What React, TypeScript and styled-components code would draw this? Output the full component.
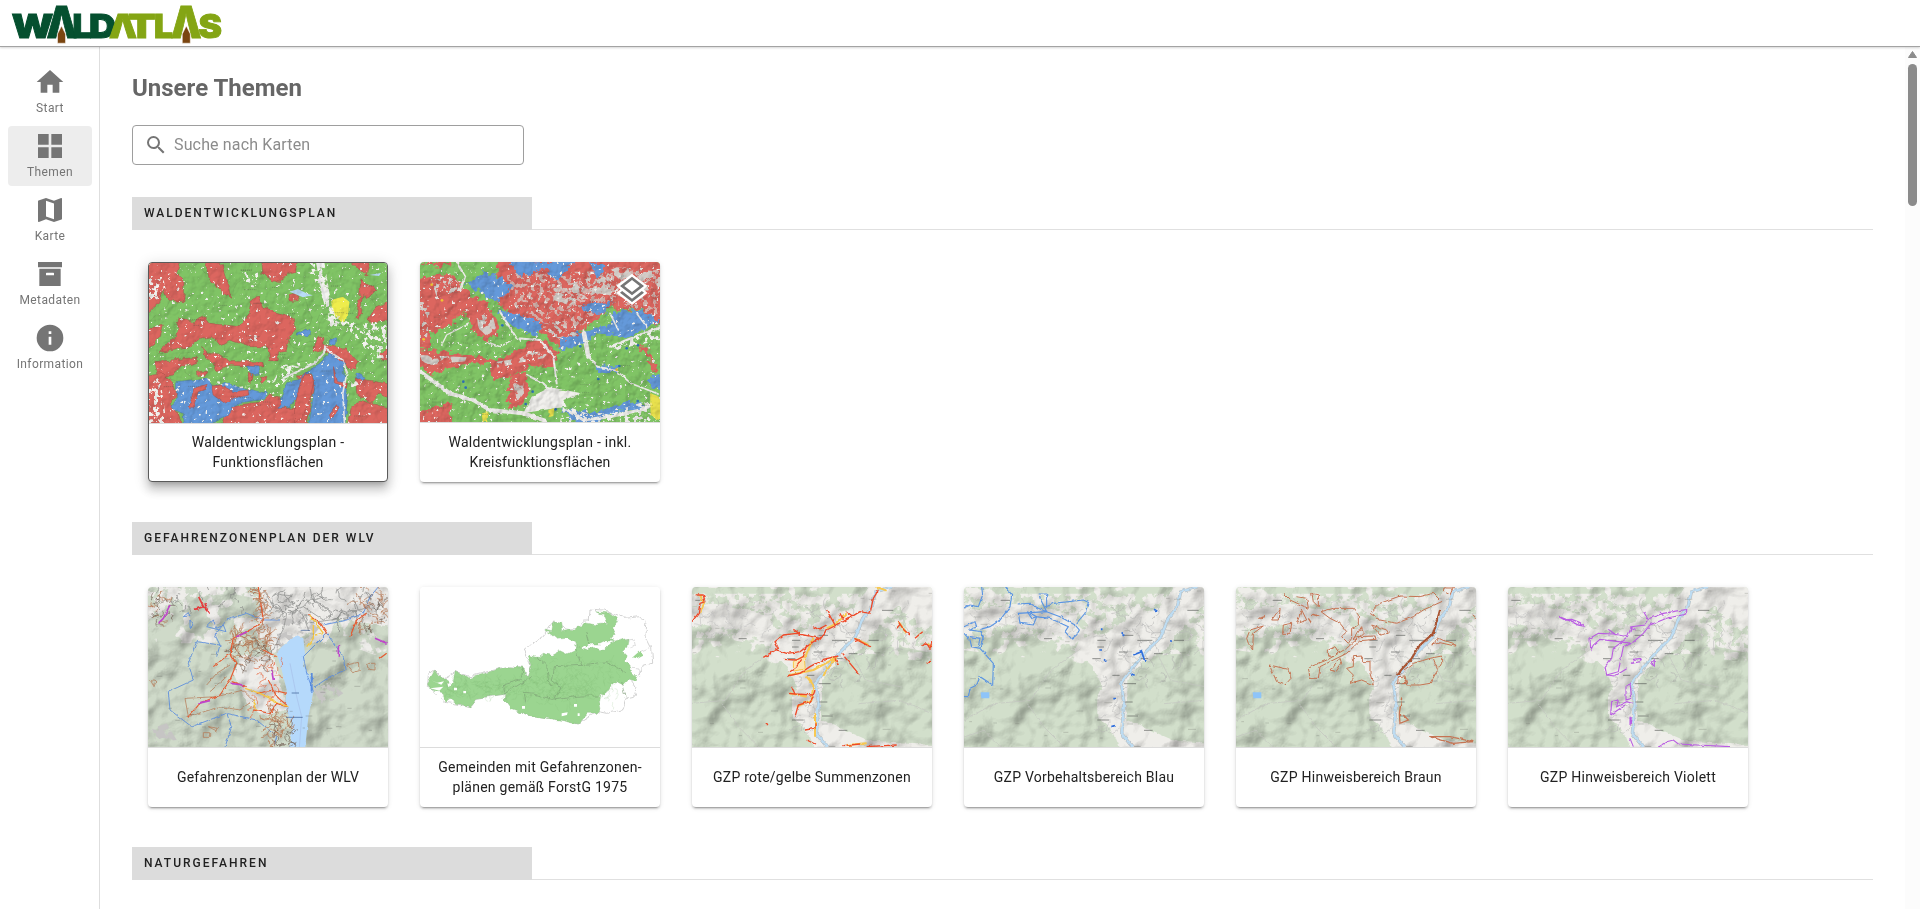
import React from "react";
import styled, { createGlobalStyle } from "styled-components";

const GlobalStyle = createGlobalStyle`
  *, *::before, *::after { box-sizing: border-box; }
  html, body { margin: 0; padding: 0; height: 100%; overflow: hidden; background: #fff; }
  body { font-family: Roboto, "Liberation Sans", sans-serif; color: #212121; }
`;

/* ---------- page frame ---------- */

const Page = styled.div`
  height: 100vh;
  display: flex;
  flex-direction: column;
  overflow: hidden;
`;

const Header = styled.header`
  flex: none;
  height: 47px;
  border-bottom: 1px solid #a3a3a3;
  box-shadow: 0 1px 2px rgba(0, 0, 0, 0.16);
  background: #fff;
  z-index: 1;
`;

const Logo = styled.svg`
  display: block;
  width: 240px;
  height: 46px;
  overflow: visible;
  font-family: Inter, sans-serif;
  font-weight: 900;
`;

const Body = styled.div`
  flex: 1;
  min-height: 0;
  display: flex;
`;

const Sidebar = styled.nav`
  flex: none;
  width: 100px;
  padding: 15px 8px 0;
  border-right: 1px solid #dedede;
  display: flex;
  flex-direction: column;
  gap: 4px;
`;

const NavItem = styled.a<{ $active?: boolean }>`
  width: 84px;
  height: 60px;
  padding-top: 4px;
  border-radius: 4px;
  display: flex;
  flex-direction: column;
  align-items: center;
  color: #757575;
  background: ${(p) => (p.$active ? "#ededed" : "transparent")};
  font-size: 12px;
  line-height: 20px;
  letter-spacing: 0.4px;
`;

const Icon = styled.svg<{ $size: number }>`
  display: block;
  flex: none;
  width: ${(p) => p.$size}px;
  height: ${(p) => p.$size}px;
  fill: currentColor;
`;

const Main = styled.main`
  flex: 1;
  min-width: 0;
  padding: 25px 32px 0;
  overflow: hidden;
`;

const Title = styled.h1`
  margin: 0 0 21px;
  height: 32px;
  font-size: 24px;
  line-height: 32px;
  font-weight: 700;
  color: #666;
`;

const SearchBox = styled.div`
  width: 392px;
  height: 40px;
  margin-bottom: 32px;
  padding-left: 11px;
  border: 1px solid #9e9e9e;
  border-radius: 4px;
  display: flex;
  align-items: center;
  gap: 6px;
  color: #757575;
`;

const Placeholder = styled.span`
  padding-bottom: 2px;
  font-size: 16px;
  letter-spacing: 0.15px;
  color: #8c8c8c;
`;

const Section = styled.section`
  margin-bottom: 40px;
`;

const SectionHead = styled.div`
  height: 33px;
  border-bottom: 1px solid #e0e0e0;
  margin-bottom: 32px;
`;

const SectionTitle = styled.h2`
  margin: 0;
  width: 400px;
  height: 33px;
  padding-left: 12px;
  background: #dcdcdc;
  font-size: 12px;
  line-height: 32px;
  font-weight: 500;
  letter-spacing: 2px;
  text-transform: uppercase;
  color: #212121;
`;

const CardRow = styled.div`
  display: flex;
  gap: 32px;
  padding-left: 16px;
`;

const Card = styled.article<{ $selected?: boolean }>`
  position: relative;
  flex: none;
  width: 240px;
  height: 220px;
  border-radius: 4px;
  overflow: hidden;
  background: #fff;
  display: flex;
  flex-direction: column;
  border: ${(p) => (p.$selected ? "1px solid #5a5a5a" : "none")};
  box-shadow: ${(p) =>
    p.$selected
      ? "0 5px 5px -3px rgba(0,0,0,.2), 0 8px 10px 1px rgba(0,0,0,.14), 0 3px 14px 2px rgba(0,0,0,.12)"
      : "0 3px 1px -2px rgba(0,0,0,.2), 0 2px 2px 0 rgba(0,0,0,.14), 0 1px 5px 0 rgba(0,0,0,.12)"};
`;

const MapPicture = styled.svg`
  display: block;
  flex: none;
  width: 100%;
  height: 160px;
`;

const CardLabel = styled.div`
  flex: 1;
  padding-bottom: 2px;
  border-top: 1px solid #dcdcdc;
  display: flex;
  align-items: center;
  justify-content: center;
  text-align: center;
  white-space: pre-line;
  font-size: 14px;
  line-height: 20px;
  letter-spacing: 0.25px;
  color: #212121;
`;

const LayerBadge = styled.svg`
  position: absolute;
  top: 12px;
  right: 12px;
  width: 32px;
  height: 32px;
  overflow: visible;
`;

const Scrollbar = styled.div`
  flex: none;
  width: 15px;
  padding-top: 4px;
  background: #fcfcfc;
  display: flex;
  flex-direction: column;
  align-items: center;
  gap: 6px;
`;

const Thumb = styled.div`
  width: 9px;
  height: 142px;
  border-radius: 5px;
  background: #8b8b8b;
`;

const SharedDefs = styled.svg`
  position: absolute;
  width: 0;
  height: 0;
`;

const Multiply = styled.rect`
  mix-blend-mode: multiply;
`;

/* ---------- map drawing helpers ---------- */

function random(seed: number) {
  let s = seed;
  return () => {
    s = (s * 1664525 + 1013904223) % 4294967296;
    return s / 4294967296;
  };
}

type Area = [number, number, number, number];

/* Short strokes standing for place names and paths */
function dashes(seed: number, n: number, [x, y, w, h]: Area, len = 12) {
  const r = random(seed);
  let d = "";
  for (let i = 0; i < n; i++) {
    const l = len * (0.5 + r());
    d += `M${(x + r() * w).toFixed(0)} ${(y + r() * h).toFixed(0)}h${l.toFixed(0)}`;
  }
  return d;
}

/* Crooked little lines such as streams, roads and zone borders */
function squiggles(seed: number, n: number, [x, y, w, h]: Area, step = 8, parts = 5) {
  const r = random(seed);
  let d = "";
  for (let i = 0; i < n; i++) {
    d += `M${(x + r() * w).toFixed(0)} ${(y + r() * h).toFixed(0)}`;
    let a = r() * 6.28;
    for (let k = 0; k < parts; k++) {
      a += (r() - 0.5) * 2.2;
      d += `l${(Math.cos(a) * step).toFixed(1)} ${(Math.sin(a) * step).toFixed(1)}`;
    }
  }
  return d;
}

function MapFilters() {
  const rough = (id: string, f: number, scale: number) => (
    <filter id={id} x="-5%" y="-5%" width="110%" height="110%" colorInterpolationFilters="sRGB">
      <feTurbulence type="fractalNoise" baseFrequency={f} numOctaves="3" seed="4" />
      <feDisplacementMap in="SourceGraphic" scale={scale} xChannelSelector="R" yChannelSelector="G" />
    </filter>
  );
  const speckle = (id: string, f: number, cut: number, seed: number) => (
    <filter id={id} x="0" y="0" width="100%" height="100%" colorInterpolationFilters="sRGB">
      <feTurbulence type="fractalNoise" baseFrequency={f} numOctaves="4" seed={seed} />
      <feColorMatrix values={`0 0 0 0 0  0 0 0 0 0  0 0 0 0 0  14 0 0 0 ${-14 * cut}`} result="n" />
      <feComposite in="SourceGraphic" in2="n" operator="in" />
    </filter>
  );
  const relief = (id: string, f: number, height: number, seed: number) => (
    <filter id={id} x="0" y="0" width="100%" height="100%" colorInterpolationFilters="sRGB">
      <feTurbulence type="fractalNoise" baseFrequency={f} numOctaves="3" seed={seed} />
      <feColorMatrix values="0 0 0 0 0  0 0 0 0 0  0 0 0 0 0  1 0 0 0 0" />
      <feDiffuseLighting surfaceScale={height} lightingColor="#fff">
        <feDistantLight azimuth="225" elevation="55" />
      </feDiffuseLighting>
      <feComponentTransfer>
        <feFuncR type="linear" slope="0.6" intercept="0.48" />
        <feFuncG type="linear" slope="0.6" intercept="0.48" />
        <feFuncB type="linear" slope="0.6" intercept="0.48" />
      </feComponentTransfer>
    </filter>
  );
  return (
    <SharedDefs aria-hidden>
      <defs>
        {rough("rough", 0.04, 18)}
        {rough("jagged", 0.06, 32)}
        {rough("wiggle", 0.06, 9)}
        {speckle("patch", 0.022, 0.56, 8)}
        {speckle("patchFine", 0.07, 0.53, 3)}
        {speckle("dust", 0.08, 0.7, 12)}
        {speckle("half", 0.035, 0.47, 21)}
        {relief("reliefSoft", 0.009, 22, 5)}
        {relief("reliefFine", 0.03, 6, 9)}
      </defs>
    </SharedDefs>
  );
}

const GREEN = "#80c465";
const RED = "#dc665f";
const BLUE = "#6499da";

function FunctionAreasMap() {
  return (
    <MapPicture viewBox="57 39 716 480" preserveAspectRatio="none">
      <rect x="57" y="39" width="716" height="480" fill={GREEN} />
      <g stroke="#5d7f4c" strokeWidth="1" fill="none" opacity="0.6">
        <path d={squiggles(7, 32, [57, 39, 716, 480], 20, 6)} />
      </g>
      <g filter="url(#rough)" stroke="#a34e48" strokeWidth="1.5" fill={RED}>
        <path d="M40 20H155L140 70 165 100 162 155 120 150 100 120 85 160 50 195Z" />
        <path d="M222 20L280 45 290 80 300 130 310 145 270 120 240 90Z" />
        <path d="M395 20H505L498 65 470 72 455 98 430 92 400 72Z" />
        <path d="M650 20L722 25 712 78 690 60Z" />
        <path d="M695 85L740 120 715 145 700 130 690 212 680 205 690 140Z" />
        <path d="M790 150L740 170 718 205 730 222 790 210Z" />
        <path d="M85 305L135 260 150 205 190 215 225 200 240 220 330 230 358 190 365 145 385 142 400 175 450 190 490 200 495 235 480 260 470 300 450 305 445 332 420 332 415 290 360 290 300 270 270 285 250 260 210 265 180 290Z" />
        <path d="M40 240L100 225 90 265 40 305Z" />
        <path d="M215 290L240 310 290 320 300 335 400 335 402 352 300 345 260 362 250 340 228 325Z" />
        <path d="M75 335L200 322 200 338 150 352 130 375 100 380 82 370Z" />
        <path d="M40 380L100 370 130 400 140 430 120 460 140 480 165 540H40Z" />
        <path d="M270 540L290 485 320 465 400 455 420 435 450 440 455 475 500 475 505 375 525 370 550 378 555 420 545 450 530 540Z" />
        <path d="M565 262H580V285L650 295 685 335 680 358 655 350 600 315 580 300 550 305Z" />
        <path d="M790 280L745 320 790 338Z" />
        <path d="M680 385L740 395 790 405V450L750 430 725 460 685 430Z" />
        <path d="M650 540L665 475 690 450 790 480V540Z" />
        <ellipse cx="492" cy="141" rx="16" ry="10" />
        <ellipse cx="217" cy="370" rx="20" ry="6" />
        <path d="M358 370l12 5-3 25-8-5zM390 375l18 8-12 20-6-8z" />
      </g>
      <g filter="url(#rough)" stroke="#4b78ae" strokeWidth="1.5" fill={BLUE}>
        <path d="M140 395L230 385 250 410 300 398 320 410 370 420 410 430 405 447 320 460 290 500 255 515 235 540H165L160 490 120 470 140 450Z" />
        <path d="M445 475L460 425 475 395 510 385 570 340 600 312 645 335 645 400 655 440 645 540H535L555 420 550 375 520 370 505 440 485 472Z" />
        <path d="M500 250l25-12 18 8-12 14zM600 265l22 2-2 18-20-2zM350 348l35 3 3 20-18 4zM680 368l28 14-8 10-22-12z" />
      </g>
      <g filter="url(#wiggle)" stroke="#a34e48" strokeWidth="1.5" fill={RED}>
        <path d="M178 472L192 415 232 403 228 418 205 425 190 472Z" />
        <path d="M245 408L275 405 310 425 355 420 357 435 310 445 288 462 250 435Z" />
        <path d="M612 350L624 395 654 400 650 415 615 398Z" />
        <path d="M622 463L630 475 604 508 600 495Z" />
        <path d="M525 375Q552 370 552 400L540 450 520 500 495 519 495 470 512 400Z" />
      </g>
      <path filter="url(#wiggle)" fill="#eeed4c" d="M605 150L640 140 660 155 655 200 640 220 608 190Z" />
      <g fill="#f3f3ef">
        <path filter="url(#patchFine)" d="M540 39H585L600 130 610 190 655 215 773 225V325H725L690 270 640 240 590 225 600 180 565 120Z" />
        <path filter="url(#half)" d="M560 39H585L600 130 620 210 600 215 575 130Z" />
        <path filter="url(#patchFine)" d="M57 85H100L110 130 57 150Z" />
        <path filter="url(#patchFine)" d="M57 400L90 380 110 519H57Z" />
        <path filter="url(#patchFine)" d="M460 340L510 350 450 410 330 415 240 395 230 385 330 410 430 395Z" />
        <path filter="url(#patchFine)" d="M645 340L665 390 700 400 660 415Z" />
        <path filter="url(#patchFine)" d="M340 60H385V100H340ZM350 255H385V275H350Z" />
        <path filter="url(#dust)" d="M57 39H773V519H57Z" />
      </g>
      <g filter="url(#wiggle)" fill="none" stroke="#e9e8e8" strokeWidth="6">
        <path d="M588 285L583 310 555 340 460 385" />
        <path d="M585 295L640 330 652 370 640 430 645 519" strokeWidth="5" />
        <path d="M575 39L570 90 595 170" />
      </g>
      <path d="M480 125l25-8 30 15 15 4-30 6zM720 75l35-6-6 9z" fill="#b9dcf8" />
      <path d={dashes(3, 40, [65, 45, 690, 460], 26)} stroke="#454a40" strokeWidth="2" strokeDasharray="4 2" opacity="0.5" />
      <Multiply x="57" y="39" width="716" height="480" filter="url(#reliefFine)" opacity="0.6" />
    </MapPicture>
  );
}

function CircleAreasMap() {
  return (
    <MapPicture viewBox="30 36 720 480">
      <rect x="30" y="36" width="720" height="480" fill={GREEN} />
      <g filter="url(#jagged)" fill={RED}>
        <path d="M265 20H770V215L720 225 700 180 600 175 520 235 500 265 450 290 380 240 310 200 240 140 262 80Z" />
        <path d="M10 95L100 70 140 80 170 130 240 170 270 240 230 272 190 240 160 185 110 235 60 250 60 300 10 290Z" />
        <path d="M10 295L170 312 250 330 300 312 360 275 400 268 442 310 432 352 360 348 330 368 250 392 240 345 180 342 60 372 10 335Z" />
        <path d="M300 378L350 368 357 430 320 482 290 462ZM10 490L120 458 132 540H10Z" />
        <path d="M690 285l20 10 30 60-6 15-16-35zM30 36H150L90 50z" />
      </g>
      <g fill="#d3cdc8">
        <path filter="url(#half)" d="M430 115L500 95 560 78 620 52 750 65V110L640 140 560 130 480 165 430 150Z" />
        <path filter="url(#patchFine)" d="M390 230L500 225 510 262 460 275Z" />
        <path filter="url(#patchFine)" opacity="0.75" d="M290 70L750 60V200L600 160 500 240 400 220 300 160Z" />
        <path filter="url(#patchFine)" d="M60 80H130L160 120 80 140ZM30 150L60 170 50 280H30Z" />
        <path filter="url(#half)" d="M200 195L245 185 258 235 230 258 205 235Z" />
        <path filter="url(#half)" d="M30 315L170 322 165 334 60 345 30 332ZM260 335L330 325 385 290 415 310 400 325 320 340 262 355Z" />
        <path filter="url(#half)" d="M305 385L340 390 342 430 322 455Z" />
      </g>
      <g filter="url(#jagged)" fill={BLUE}>
        <path d="M165 100L225 65 290 95 305 115 262 158 210 125Z" />
        <path d="M262 180L330 197 400 218 375 262 330 238 290 215Z" />
        <path d="M450 270L520 243 600 225 610 188 650 180 700 185 745 212 650 262 560 250 530 272 500 292 452 300Z" />
        <path d="M520 165L602 155 592 188 530 188ZM300 36L500 30 470 60 440 95 410 58 330 80Z" />
        <path d="M450 475L560 490 620 465 690 455 712 475 600 492 545 530 490 512Z" />
        <path d="M560 345L630 350 625 368 562 372ZM720 380H760V430L720 410ZM540 36l20 50 30-40z" />
      </g>
      <g filter="url(#wiggle)" stroke="#ecebe8" fill="none" strokeLinecap="round">
        <path d="M520 240L532 310 562 350 620 362 662 400 745 432" strokeWidth="5" />
        <path d="M522 250L535 320" strokeWidth="14" />
        <path d="M30 365L120 430 190 450 240 480 340 490 405 512" strokeWidth="12" />
        <path d="M140 36L165 80 150 120" strokeWidth="7" />
        <path d="M270 185L320 265 390 270 430 320 440 400" strokeWidth="6" />
        <path d="M350 375L400 400 430 430" strokeWidth="6" />
        <path d="M95 285L110 255 175 222M230 275L270 290 300 275" strokeWidth="4" />
        <path d="M600 190L625 240M680 190L710 230" strokeWidth="5" />
        <path d="M600 290L650 270 750 232" strokeWidth="7" />
        <path d="M470 480L520 510 600 500 690 480 750 455" strokeWidth="9" />
      </g>
      <g fill="#f1f0ed">
        <path filter="url(#wiggle)" d="M365 440L420 412 515 430 460 450 470 470 400 480 340 490Z" />
        <path filter="url(#patchFine)" d="M600 290L750 235V270L620 300ZM460 465L560 500 750 440V516H450Z" />
        <path filter="url(#dust)" d="M30 36H750V516H30Z" />
      </g>
      <path filter="url(#wiggle)" fill="#e8e04d" d="M415 480l18-6-3 24-14 4zM215 490l20-4-3 30h-14zM720 430l30 10v70l-28-12z" />
      <g fill="#2f72b8">
        <circle cx="277" cy="226" r="4" /><circle cx="160" cy="395" r="4" /><circle cx="167" cy="413" r="4" />
        <circle cx="368" cy="425" r="4" /><circle cx="650" cy="295" r="4" /><circle cx="684" cy="286" r="4" />
        <circle cx="565" cy="387" r="4" /><circle cx="347" cy="462" r="4" /><circle cx="437" cy="478" r="4" />
        <circle cx="628" cy="348" r="4" /><circle cx="511" cy="289" r="4" /><circle cx="683" cy="453" r="4" />
      </g>
      <g fill="#efc52f">
        <circle cx="65" cy="104" r="4" /><circle cx="96" cy="151" r="4" /><circle cx="41" cy="268" r="4" /><circle cx="620" cy="359" r="4" />
      </g>
      <path d={dashes(13, 30, [40, 45, 690, 460], 24)} stroke="#4e544a" strokeWidth="2" strokeDasharray="4 2" opacity="0.4" />
      <Multiply x="30" y="36" width="720" height="480" filter="url(#reliefFine)" opacity="0.8" />
    </MapPicture>
  );
}

function HazardPlanMap() {
  return (
    <MapPicture viewBox="54 231 720 480">
      <rect x="54" y="231" width="720" height="480" fill="#cfdac9" />
      <g fill="#eeedea">
        <path filter="url(#rough)" d="M400 210H790V350L680 340 620 320 590 400 540 370 500 380 430 430 380 330Z" />
        <path filter="url(#rough)" d="M330 440L430 430 470 600 400 615 350 580 310 490Z" />
        <path filter="url(#half)" d="M54 231H400V270L300 250 150 270 54 330Z" />
        <path filter="url(#patch)" d="M54 231H774V450L640 400H54Z" />
      </g>
      <Multiply x="54" y="231" width="720" height="480" filter="url(#reliefSoft)" />
      <path filter="url(#half)" fill="#c6c5c4" d="M440 330L500 300 580 340 530 400 440 430ZM550 540L600 515 640 550 580 590ZM54 660L110 640 140 690 54 700Z" />
      <path filter="url(#wiggle)" fill="#b5d9fb" d="M455 410L500 375 520 385 525 430 520 465 545 510 550 545 535 620 525 720H480L485 640 465 590 470 540 455 480 440 430Z" />
      <path d="M480 460L500 560 515 620 508 711" fill="none" stroke="#a3b6e2" strokeWidth="1.5" />
      <g fill="none" filter="url(#wiggle)" strokeLinejoin="round">
        <g stroke="#858685" strokeWidth="2">
          <path d="M430 420L460 360 470 310 520 290 545 260 540 231M470 310L430 290 400 240M510 300L530 340 600 330 680 320 670 260M520 290L580 330 610 310 570 280" />
          <path d={squiggles(91, 42, [400, 235, 370, 100], 9, 6)} />
          <path d={squiggles(92, 20, [54, 235, 340, 60], 6, 5)} />
        </g>
        <g stroke="#5a8cdc" strokeWidth="2.6">
          <path d="M200 395L270 405 255 375 290 330 350 310 400 330 450 330M200 395L175 460 190 510 115 545 120 600 185 650 290 610 380 630 440 680 430 711M290 610L305 650 285 711M270 405L260 440" />
          <path d="M580 345L650 330 700 310 720 260 745 231M520 440L560 400 590 370 640 440 645 480 600 500 555 530M520 440L530 490 550 545M230 350l20-20 10 25 20-10 8 20zM160 320l15-12 5 10zM180 330l10 15-10 8z" />
          <path d="M545 490V548" strokeWidth="6" />
        </g>
        <g stroke="#b3714c" strokeWidth="2">
          <path d={squiggles(31, 52, [305, 370, 120, 80], 7, 6)} />
          <path d={squiggles(32, 34, [380, 235, 25, 120], 6, 5)} />
          <path d={squiggles(33, 28, [415, 605, 60, 90], 7, 6)} />
          <path d={squiggles(34, 24, [680, 240, 92, 120], 7, 5)} />
          <path d={squiggles(37, 12, [54, 240, 80, 100], 6, 4)} />
          <path d="M165 565L260 560 340 540 370 570 330 600 270 590 175 620ZM230 525L260 490 300 465M240 545L290 500M650 465l35-8 3 25-20 6zM710 460l25 0v20l-20-2zM235 650l30 5-5 8zM220 668h22v14h-22zM62 512l16 2-6 16z" />
        </g>
        <g stroke="#6a564a" strokeWidth="1.8">
          <path d={squiggles(41, 18, [310, 380, 110, 110], 7, 5)} />
          <path d={squiggles(42, 16, [435, 640, 45, 65], 6, 5)} />
          <path d={squiggles(43, 14, [60, 250, 70, 80], 5, 5)} />
          <path d={squiggles(44, 14, [690, 260, 80, 110], 5, 5)} />
        </g>
        <g stroke="#e65a30" strokeWidth="3.5">
          <path d="M175 620L210 580 270 555 300 510 320 460 300 430 250 470M300 430L310 385 370 355 400 330 385 231M305 515L350 530M380 550L430 540 470 550M370 600L420 610 440 580 470 590M400 420L440 440" />
          <path d="M205 258L220 290 238 310M220 290L195 298M225 280L232 300" stroke="#e33b3c" strokeWidth="5" />
          <path d="M535 310L575 345 590 370M660 380L680 330 710 310 M770 430L750 445 M415 510L440 560 470 585" />
          <path d={squiggles(52, 18, [350, 450, 110, 150], 8, 4)} strokeWidth="1.8" />
        </g>
        <g stroke="#bf45cb" strokeWidth="5">
          <path d="M120 285L100 325 85 340M625 405V440M735 385L770 400M320 380L350 365M205 580L240 572M300 520L340 525M425 480L430 510" />
        </g>
        <g stroke="#f4c642" strokeWidth="4">
          <path d="M550 345V385L530 410M540 315L580 370 555 375M345 535L390 550 460 585 475 590M380 600L370 570" />
        </g>
      </g>
      <path d={dashes(61, 40, [54, 240, 700, 450], 14)} stroke="#5f625e" strokeWidth="1.8" opacity="0.5" />
      <path d="M485 549h22M468 622h50M512 361h28" stroke="#35588f" strokeWidth="2" />
    </MapPicture>
  );
}

function AustriaMap() {
  return (
    <MapPicture viewBox="30 51 720 480">
      <rect x="30" y="51" width="720" height="480" fill="#fff" />
      <g filter="url(#rough)" strokeLinejoin="round">
        <path
          d="M340 240L400 200 410 180 432 152 455 175 490 180 520 150 535 150 537 117 580 120 640 145 690 140 708 155 705 195 725 235 728 280 700 285 690 310 665 335 680 360 675 378 645 385 635 420 590 430 565 425 505 462 460 450 350 435 305 415 285 390 288 372 200 385 180 410 140 402 105 397 80 375 52 350 55 315 75 300 100 325 135 305 180 320 290 290 340 295 355 318 366 285 350 260Z"
          fill="#fff"
          stroke="#b5b5b5"
          strokeWidth="1.8"
        />
        <path
          d="M404 180L425 185 430 155 452 160 455 185 480 180 495 182 500 165 515 168 520 158 560 165 590 160 580 135 560 125 600 130 622 145 615 160 605 170 615 190 600 205 610 215 590 212 570 222 545 222 530 235 520 228 505 235 495 215 470 205 440 208 425 195Z"
          fill="#9bd590"
          stroke="#85b57b"
        />
        <path
          d="M355 255L385 262 400 250 425 256 450 242 470 252 490 242 495 225 530 240 555 232 580 238 600 220 625 212 655 205 650 235 640 245 652 258 640 270 660 285 665 305 680 320 675 335 655 330 640 345 620 335 600 350 585 375 570 372 565 395 570 420 560 430 535 430 505 462 460 452 350 435 305 418 285 390 288 372 200 385 180 410 140 400 120 385 105 397 100 372 60 360 52 340 75 300 85 315 110 330 115 350 130 335 135 305 180 325 290 290 340 295 355 318 366 285Z"
          fill="#9bd590"
          stroke="#85b57b"
        />
        <path d="M668 262L690 242 698 255 680 265Z" fill="#9bd590" />
        <path
          d="M340 295L330 330 280 345 285 370M366 320L285 370M385 262L410 285 415 330 430 350M430 290L540 285 590 278 650 305M430 290L425 330 450 350 430 390 370 372 340 370M430 390L510 378 565 378M340 370L345 400M530 185L540 225M495 235L515 285M635 335L650 385"
          fill="none"
          stroke="#789671"
          strokeWidth="1.7"
        />
      </g>
      <path d={squiggles(70, 230, [105, 330, 440, 50], 6, 4)} stroke="#84bd79" strokeWidth="0.9" fill="none" opacity="0.6" />
      <path d={squiggles(73, 140, [370, 265, 250, 140], 6, 4)} stroke="#84bd79" strokeWidth="0.9" fill="none" opacity="0.6" />
      <path d="M62 330l20 8 20-4-8 10zM60 355l40-5-12 12zM132 353h9v8h-9zM160 363h8v7h-8zM336 408h9v8h-9zM455 430l18-3-2 8-16 4zM492 402h9v8h-9zM503 430h6v8h-6zM70 375l28 0-6 14z" fill="#fff" />
      <g fill="none" stroke="#bcbcbc" strokeWidth="1.5" filter="url(#wiggle)">
        <path d="M650 210l22-2 4 20-18 6M690 245l35-15M665 295l25 2 2 20" />
      </g>
    </MapPicture>
  );
}

/* Shared relief map of the valley; the overlays use the same coordinates */
function ValleyBase() {
  return (
    <>
      <rect x="0" y="0" width="830" height="480" fill="#d2dfcb" />
      <g fill="#efeeea">
        <path
          filter="url(#rough)"
          d="M640 -20H850V90L800 130 720 60 690 80 640 140 600 190 520 240 490 280 490 400 560 430 640 465 850 475V500H470L440 420 400 390 400 330 415 300 385 240 330 190 350 150 420 140 500 90 590 60Z"
        />
        <path filter="url(#rough)" d="M-20 70L80 60 170 50 250 65 330 90 350 150 330 175 250 130 140 110 60 130 -20 110Z" />
        <path filter="url(#half)" d="M0 20H600V130L330 180 200 155 0 150Z" />
        <path filter="url(#patch)" d="M0 0H830V230L640 200 340 230 0 190Z" />
        <path filter="url(#half)" d="M660 80H830V200L730 180Z" />
      </g>
      <Multiply x="0" y="0" width="830" height="480" filter="url(#reliefSoft)" />
      <g filter="url(#wiggle)" fill="none">
        <path d="M0 400L90 350 200 340 260 250 350 185M110 480L60 430 0 450M300 480L240 420 190 350M830 380L720 340 600 350M580 200L620 280 730 300" stroke="#c2c4c0" strokeWidth="2" />
        <path d={squiggles(81, 34, [430, 50, 230, 220], 12, 4)} stroke="#b0b0b0" strokeWidth="1.6" />
        <path d={squiggles(82, 28, [0, 30, 340, 120], 11, 4)} stroke="#bcbcbc" strokeWidth="1.5" />
        <path d={squiggles(83, 14, [405, 280, 90, 190], 10, 4)} stroke="#b4b4b4" strokeWidth="1.5" />
        <path d={squiggles(84, 12, [660, 60, 150, 130], 12, 4)} stroke="#b4b4b4" strokeWidth="1.5" />
        <path d="M700 0L650 15 640 60 615 90 590 150 540 200 500 250 472 285 480 350 473 440 505 480" stroke="#b4babd" strokeWidth="10" />
        <path d="M700 0L650 15 640 60 615 90 590 150 540 200 500 250 472 285 480 350 473 440 505 480" stroke="#bddcf2" strokeWidth="7" />
      </g>
      <path d="M50 316h26v18H52z" fill="#8ec4f8" />
      <path d="M400 160h25M400 180h20M520 160h45M480 145h28M465 195h26M445 265h22M480 290h36M482 345h24M490 387h32M400 399h35M385 215h25M570 200h26M670 70h34M630 160h30M530 215h22M110 40h28M240 155h24M540 430h26M510 480h20" stroke="#5b5e5a" strokeWidth="2" />
      <path d={dashes(85, 40, [0, 10, 820, 450], 16)} stroke="#777a74" strokeWidth="1.6" opacity="0.6" />
    </>
  );
}

function SummaryZonesMap() {
  return (
    <MapPicture viewBox="100 0 720 480">
      <ValleyBase />
      <g transform="translate(64 -51)" fill="none" strokeLinejoin="round" filter="url(#wiggle)">
        <g stroke="#f7c851" strokeWidth="6">
          <path d="M60 75L72 100 60 130M440 175L470 160 500 130M400 205L380 250 360 300M330 315L400 300 470 262 M470 262L440 300 430 318M380 320L400 345 395 390 350 410M330 370L380 380 M405 430V500M655 155L680 190M525 205L565 225M500 525L560 520M740 220L756 230M590 51L620 62" />
          <path d="M340 275l32-18 4 40-35 6z" fill="#fbe5b4" strokeWidth="3" />
        </g>
        <g stroke="#ee4928" strokeWidth="4">
          <path d="M250 262L295 235 285 215 310 195 350 190 420 205 440 180 490 155 540 125 570 130 580 85 595 60M340 178L365 195M400 170L415 178 440 165 M440 120L465 165M480 130L490 150M500 125L520 140M290 240L320 250 360 245 400 215 420 205M310 268L350 270 370 260 380 225M330 305L350 290 365 268M322 318L360 310 390 290 430 268 475 258M485 250L510 280 535 310M465 265L475 285M325 370L345 372 335 350M345 372L400 375 405 360M345 440L355 405 390 395 400 380M375 480L405 475V460M380 510L405 522M523 205L570 230M523 215L545 208M490 527L540 522M560 530L650 525M655 155L672 180 690 195M650 175l10-12M705 205L728 185M725 230L738 218 750 235 756 215M740 280l14-10M36 155L55 130 60 100 75 95 70 75 50 75M260 461h6" />
        </g>
      </g>
    </MapPicture>
  );
}

function BlueReserveMap() {
  return (
    <MapPicture viewBox="0 0 720 480">
      <ValleyBase />
      <g transform="translate(-42 -51)" fill="none" stroke="#5a94e2" strokeWidth="3.4" filter="url(#wiggle)">
        <path d="M95 51L98 75 85 110 60 105 40 115M165 45L185 75 180 110 150 150 120 170 90 178 100 200 90 235 65 230 60 210 42 190M90 235L130 280 128 345 90 320 80 345 60 355 55 380H42M42 170L75 155 80 170 60 180 95 185 100 210M60 200L90 205 85 230" />
        <path d="M203 102L240 100 265 115 290 125 270 85 268 72 290 72 290 110 310 100 400 90 415 97 405 130 375 165M290 125L330 140 375 165 388 180 380 195 365 207 345 185 355 170 300 145 260 140 250 165 210 160 205 130ZM232 125L245 145 260 140Z" />
        <path d="M515 190l7 8M455 175v6M448 240h8M462 268l4 4M550 255L575 245 585 275M540 310l14 6M490 386h8M484 470l10-3M612 118l10 6M660 212l6 2" stroke="#2f6fdd" strokeWidth="5" />
      </g>
    </MapPicture>
  );
}

function BrownNoticeMap() {
  return (
    <MapPicture viewBox="0 0 720 480">
      <ValleyBase />
      <g transform="translate(-48 -51)" fill="none" stroke="#c57453" strokeWidth="3" filter="url(#wiggle)">
        <path d="M148 285L205 298 213 325 195 345 170 335ZM265 293L325 268 380 235 430 190 425 170 400 210 410 200 465 198 468 208 420 212 380 250 300 290 295 325 270 325ZM325 240L345 230 355 245 340 260 325 255ZM330 300L360 265 365 280 348 305Z" />
        <path d="M400 260L425 258 425 275 450 275 450 310 460 345 425 330 390 340 400 315 380 295 400 290ZM450 130L480 100 540 78 600 80 640 70 665 95 610 120 580 140 530 160 480 150Z" />
        <path d="M552 300L580 280 630 265 665 258 665 280 630 340 600 345 560 345 555 330M640 265L655 305M535 320L555 318 560 340 533 342ZM455 165L500 180 505 190 480 195ZM635 225L655 205 700 220 705 228 660 218ZM675 51L700 51 690 75 673 65Z" />
        <path d="M303 125L340 115 400 115 415 135 415 165 395 175 395 205 385 220 365 200 380 185 360 160 330 145ZM155 150L180 115 178 150ZM230 160L245 120 260 150ZM190 165L215 160 210 190 188 190ZM80 205L90 180 130 168 100 190 98 240 85 220ZM190 70L210 90 265 115 260 85 230 80M275 70L295 75 295 110 280 95ZM755 130L768 145" />
        <path d="M660 120L640 190 600 225 575 265 530 315" stroke="#a95432" strokeWidth="6" />
        <path d="M545 385L538 430 540 460 565 450 550 435M628 500L690 500 760 515 700 520ZM300 140l-25-8M265 145l10 15M135 140l-20 5" strokeWidth="4" />
      </g>
    </MapPicture>
  );
}

function VioletNoticeMap() {
  return (
    <MapPicture viewBox="100 0 720 480">
      <ValleyBase />
      <g transform="translate(46 -51)" fill="none" stroke="#b95ce2" strokeWidth="3.3" filter="url(#wiggle)">
        <path d="M302 240L300 205 325 190 370 192 412 200 425 170 465 165 480 145 520 130 590 118 590 132 530 145 480 165 460 190 425 220 385 215 330 208 310 225ZM458 120L475 150M355 178L375 192M510 122L520 138" />
        <path d="M425 220L400 230 385 305 350 315 345 290 365 265 370 235 410 205M350 315L375 318 410 296M425 280L430 268 455 265 450 275ZM483 280L493 270 493 288Z" />
        <path d="M408 350L420 340 425 385 408 390ZM362 435L365 395 385 390 380 410 410 395 425 400M362 435L405 405M420 440V465L424 440M420 505L430 530M505 530L530 515 550 510 565 522 620 525 720 530M420 170l20 10" />
        <path d="M207 140L225 150 245 148 270 158 280 168 265 165 245 155Z" strokeWidth="4" />
      </g>
    </MapPicture>
  );
}

/* ---------- icons ---------- */

const paths = {
  home: "M10,20V14H14V20H19V12H22L12,3L2,12H5V20H10Z",
  grid: "M3,11H11V3H3M3,21H11V13H3M13,21H21V13H13M13,3V11H21V3",
  map: "M15,19L9,16.89V5L15,7.11M20.5,3C20.44,3 20.39,3 20.34,3L15,5.1L9,3L3.36,4.9C3.15,4.97 3,5.15 3,5.38V20.5A0.5,0.5 0 0,0 3.5,21C3.55,21 3.61,21 3.66,20.97L9,18.9L15,21L20.64,19.1C20.85,19 21,18.85 21,18.62V3.5A0.5,0.5 0 0,0 20.5,3Z",
  archive: "M3,3H21V7H3V3M4,8H20V21H4V8M9.5,11A0.5,0.5 0 0,0 9,11.5V13H15V11.5A0.5,0.5 0 0,0 14.5,11H9.5Z",
  info: "M13,9H11V7H13M13,17H11V11H13M12,2A10,10 0 0,0 2,12A10,10 0 0,0 12,22A10,10 0 0,0 22,12A10,10 0 0,0 12,2Z",
  search:
    "M15.5 14h-.79l-.28-.27A6.471 6.471 0 0 0 16 9.5 6.5 6.5 0 1 0 9.5 16c1.61 0 3.09-.59 4.23-1.57l.27.28v.79l5 4.99L20.49 19l-4.99-5zm-6 0C7.01 14 5 11.99 5 9.5S7.01 5 9.5 5 14 7.01 14 9.5 11.99 14 9.5 14z",
  layers:
    "M12,18.54L19.37,12.8L21,14.07L12,21.07L3,14.07L4.62,12.81L12,18.54M12,16L3,9L12,2L21,9L12,16M12,4.53L6.26,9L12,13.47L17.74,9L12,4.53Z",
};

function Glyph({ name, size = 32 }: { name: keyof typeof paths; size?: number }) {
  return (
    <Icon $size={size} viewBox="0 0 24 24" aria-hidden>
      <path d={paths[name]} />
    </Icon>
  );
}

function WaldatlasLogo() {
  const dark = "#05502f";
  const lime = "#84a514";
  const letter = (ch: string, x: number, w: number, fill: string, size = 33) => (
    <text
      x={x}
      y="38"
      fontSize={size}
      textLength={w}
      lengthAdjust="spacingAndGlyphs"
      fill={fill}
      stroke={fill}
      strokeWidth="0.9"
    >
      {ch}
    </text>
  );
  return (
    <Logo viewBox="0 0 240 46" role="img" aria-label="Waldatlas">
      {letter("W", 11.6, 42, dark)}
      {letter("Λ", 46.5, 30.5, dark, 44.5)}
      {letter("L", 72.5, 19, dark)}
      {letter("D", 89, 27, dark)}
      {letter("Λ", 109, 28, lime)}
      {letter("T", 128, 27.5, lime)}
      {letter("L", 154, 19, lime)}
      {letter("Λ", 171, 30.5, lime, 44.5)}
      {letter("S", 198.5, 23.5, lime)}
      <g fill="#7a4510" stroke="#fff" strokeWidth="0.5">
        <path d="M61.5 26L65.5 34V43.2H57.5V34Z" />
        <path d="M186.3 26L190.3 34V43.2H182.3V34Z" />
      </g>
    </Logo>
  );
}

/* ---------- content ---------- */

const navigation: { label: string; icon: keyof typeof paths; active?: boolean }[] = [
  { label: "Start", icon: "home" },
  { label: "Themen", icon: "grid", active: true },
  { label: "Karte", icon: "map" },
  { label: "Metadaten", icon: "archive" },
  { label: "Information", icon: "info" },
];

interface Topic {
  label: string;
  Picture: () => React.ReactElement;
  selected?: boolean;
  layered?: boolean;
}

const sections: { title: string; topics: Topic[] }[] = [
  {
    title: "Waldentwicklungsplan",
    topics: [
      { label: "Waldentwicklungsplan -\nFunktionsflächen", Picture: FunctionAreasMap, selected: true },
      { label: "Waldentwicklungsplan - inkl.\nKreisfunktionsflächen", Picture: CircleAreasMap, layered: true },
    ],
  },
  {
    title: "Gefahrenzonenplan der WLV",
    topics: [
      { label: "Gefahrenzonenplan der WLV", Picture: HazardPlanMap },
      { label: "Gemeinden mit Gefahrenzonen-\nplänen gemäß ForstG 1975", Picture: AustriaMap },
      { label: "GZP rote/gelbe Summenzonen", Picture: SummaryZonesMap },
      { label: "GZP Vorbehaltsbereich Blau", Picture: BlueReserveMap },
      { label: "GZP Hinweisbereich Braun", Picture: BrownNoticeMap },
      { label: "GZP Hinweisbereich Violett", Picture: VioletNoticeMap },
    ],
  },
  { title: "Naturgefahren", topics: [] },
];

function TopicCard({ label, Picture, selected, layered }: Topic) {
  return (
    <Card $selected={selected}>
      <Picture />
      {layered && (
        <LayerBadge viewBox="0 0 24 24" aria-hidden>
          <path d="M12 2L21 9 18.2 11.6 21 14.1 12 21.1 3 14.1 5.8 11.6 3 9Z" fill="#fff" stroke="#fff" strokeWidth="3.4" />
          <path d={paths.layers} fill="#757575" />
        </LayerBadge>
      )}
      <CardLabel>{label}</CardLabel>
    </Card>
  );
}

export default function App() {
  return (
    <Page>
      <GlobalStyle />
      <MapFilters />
      <Header>
        <WaldatlasLogo />
      </Header>
      <Body>
        <Sidebar>
          {navigation.map((item) => (
            <NavItem key={item.label} $active={item.active}>
              <Glyph name={item.icon} />
              {item.label}
            </NavItem>
          ))}
        </Sidebar>
        <Main>
          <Title>Unsere Themen</Title>
          <SearchBox>
            <Glyph name="search" size={24} />
            <Placeholder>Suche nach Karten</Placeholder>
          </SearchBox>
          {sections.map((section) => (
            <Section key={section.title}>
              <SectionHead>
                <SectionTitle>{section.title}</SectionTitle>
              </SectionHead>
              <CardRow>
                {section.topics.map((topic) => (
                  <TopicCard key={topic.label} {...topic} />
                ))}
              </CardRow>
            </Section>
          ))}
        </Main>
        <Scrollbar>
          <svg width="9" height="7" viewBox="0 0 9 7" aria-hidden>
            <path d="M4.5 0.5L8.5 6.5H0.5Z" fill="#8b8b8b" stroke="#8b8b8b" strokeLinejoin="round" />
          </svg>
          <Thumb />
        </Scrollbar>
      </Body>
    </Page>
  );
}
